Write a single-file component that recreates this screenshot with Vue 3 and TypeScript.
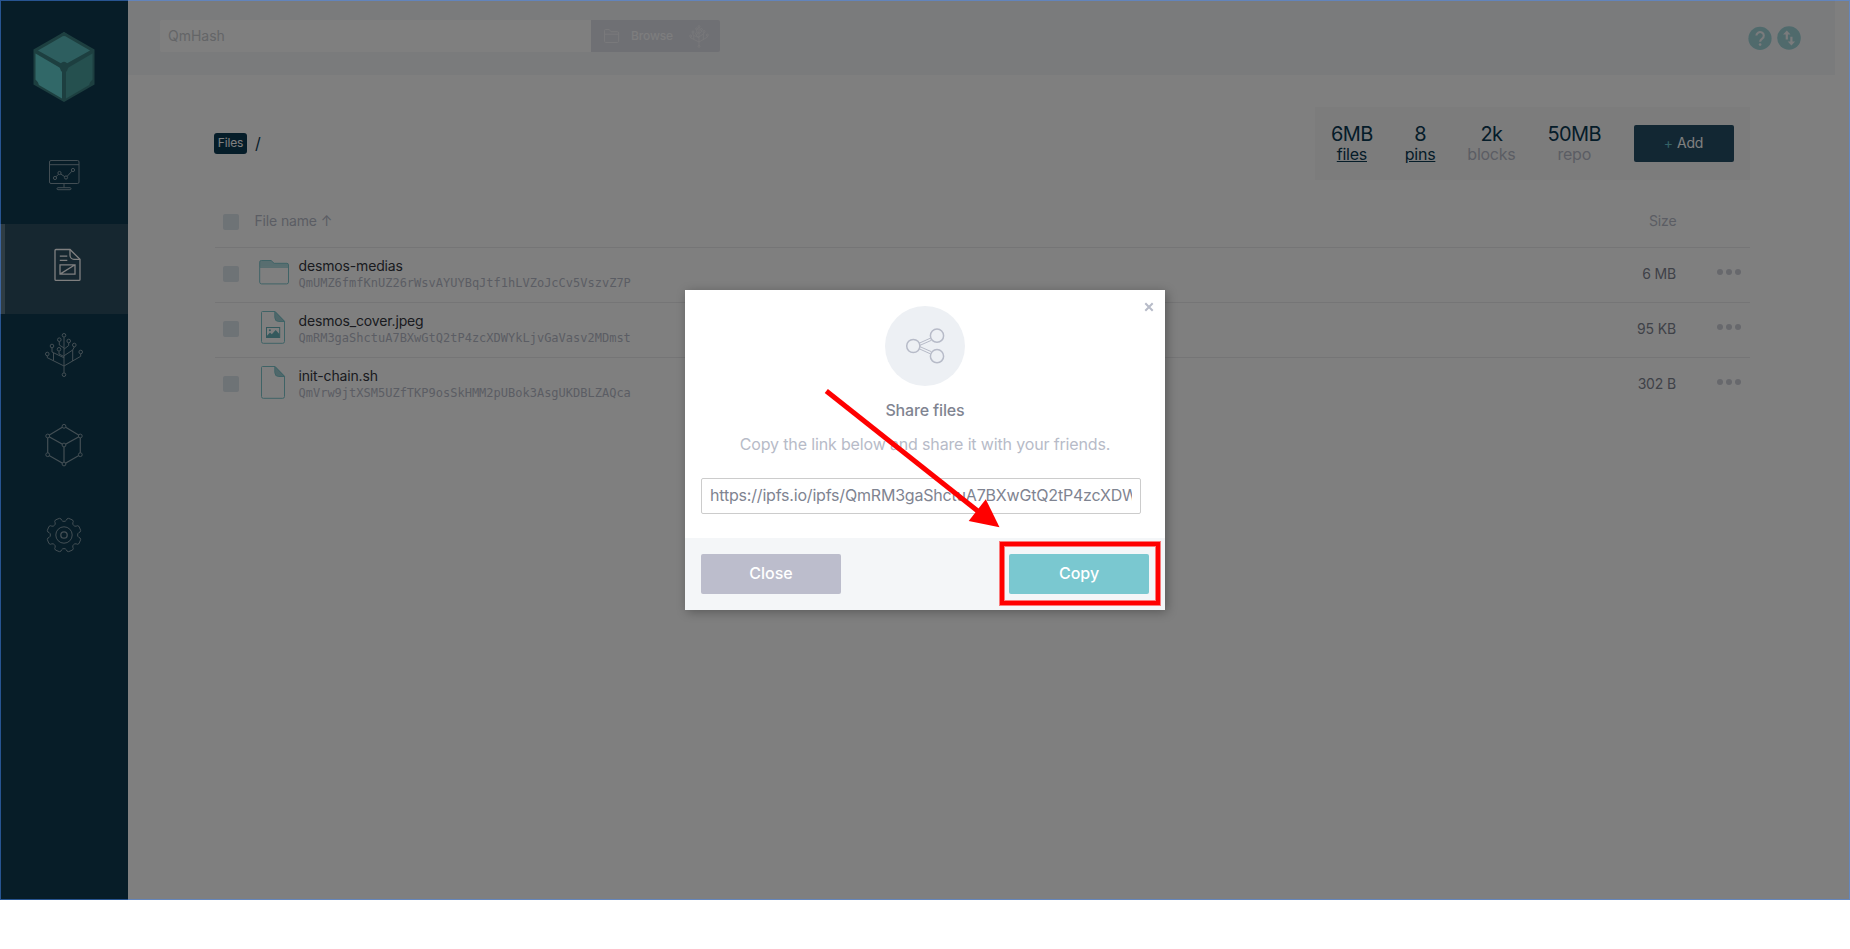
<script setup lang="ts">
interface FileRow {
  name: string
  hash: string
  size: string
  kind: 'folder' | 'image' | 'doc'
}

interface Stat {
  value: string
  label: string
  link: boolean
}

const files: FileRow[] = [
  { name: 'desmos-medias', hash: 'QmUMZ6fmfKnUZ26rWsvAYUYBqJtf1hLVZoJcCv5VszvZ7P', size: '6 MB', kind: 'folder' },
  { name: 'desmos_cover.jpeg', hash: 'QmRM3gaShctuA7BXwGtQ2tP4zcXDWYkLjvGaVasv2MDmst', size: '95 KB', kind: 'image' },
  { name: 'init-chain.sh', hash: 'QmVrw9jtXSM5UZfTKP9osSkHMM2pUBok3AsgUKDBLZAQca', size: '302 B', kind: 'doc' },
]

const stats: Stat[] = [
  { value: '6MB', label: 'files', link: true },
  { value: '8', label: 'pins', link: true },
  { value: '2k', label: 'blocks', link: false },
  { value: '50MB', label: 'repo', link: false },
]

const link = 'https://ipfs.io/ipfs/QmRM3gaShctuA7BXwGtQ2tP4zcXDWYkLjvGaVasv2MDmst'

const treeNodes = [
  [30, 10.3], [25.3, 14.7], [34.7, 16], [18, 21], [40.3, 20], [25, 24.3], [13.3, 29], [46.7, 27], [30, 49.7],
]
const treeEdges =
  'M30 12.3V47.8M25.3 16.6V20L30 23M34.7 18V20.5L30 24.2M18 23v4L30 32.8M25 26.3V29L30 31.5M40.3 22l-1.6 3L30 30.8M38.7 25V36M19.5 28V35.6M13.3 31V32.7L30 41L46.7 31.3V29'

const cubeNodes = [
  [30, 11.3], [13.7, 21], [46.3, 21], [30, 30], [13.7, 39.7], [46.3, 39.7], [30, 49],
]

// Eight-toothed gear outline, centred on (30, 30).
function gearPath(): string {
  const profile: [number, number][] = [
    [-22.5, 13.6], [-17, 13.9], [-13.5, 15], [-12, 16.4], [-7, 17.3], [7, 17.3], [12, 16.4], [13.5, 15], [17, 13.9],
  ]
  const pts: string[] = []
  for (let t = 0; t < 8; t++) {
    for (const [a, r] of profile) {
      const rad = ((t * 45 + 22.5 + a) * Math.PI) / 180
      pts.push(`${(30 + r * Math.cos(rad)).toFixed(2)} ${(30 + r * Math.sin(rad)).toFixed(2)}`)
    }
  }
  return `M${pts.join('L')}Z`
}
const gear = gearPath()
</script>

<template>
  <div class="page">
    <aside class="sidebar">
      <svg class="logo" width="62" height="70" viewBox="0 0 62 70">
        <path d="M31 0L61.5 17.5V52.5L31 70L.5 52.5V17.5Z" fill="#3b7f80" />
        <path d="M31 3.5L57 18.5L31 33L5 18.5Z" fill="#5bbdbf" />
        <path d="M2.5 21.5L29 37V66.5L2.5 51Z" fill="#62d0d1" />
        <path d="M59.5 21.5L33 37V66.5L59.5 51Z" fill="#4ba09f" />
        <path d="M26 33.5Q31 26 36 33.5L34 39Q31 42 28 39ZM27 2.5L31 0l4 2.5Q31 6 27 2.5ZM1 47Q6 49 6 55L1 52ZM61 47Q56 49 56 55L61 52Z" fill="#3b7f80" />
      </svg>
      <nav class="nav">
        <a class="item">
          <svg width="60" height="60" viewBox="0 0 60 60">
            <rect x="15.5" y="15.5" width="29.5" height="23" rx="1.5" />
            <path d="M15.5 19.7H45M30 38.5V42.7" />
            <rect x="23" y="42.7" width="14" height="2" rx="1" />
            <path d="M22 31.8L24.5 29.2M26.7 29L30.8 31.7M33.1 31.4L37.9 26.2" />
            <circle cx="21" cy="33" r="1.6" /><circle cx="25.5" cy="28" r="1.6" />
            <circle cx="32" cy="32.5" r="1.6" /><circle cx="39" cy="25" r="1.6" />
          </svg>
        </a>
        <a class="item active">
          <svg width="60" height="60" viewBox="0 0 60 60">
            <g transform="translate(-1 -.2)">
              <path d="M20 14.7H34L44 24.5V44.6a1 1 0 0 1-1 1H20a1 1 0 0 1-1-1V15.7a1 1 0 0 1 1-1Z" />
              <path d="M34 14.7V20.5a4 4 0 0 0 4 4H44" />
              <path d="M23.8 21.3H31.3M23.8 25.6H31.3M24 30H39V39.3H24ZM24 39.3L39 30" />
            </g>
          </svg>
        </a>
        <a class="item">
          <svg width="60" height="60" viewBox="0 0 60 60">
            <path :d="treeEdges" />
            <circle v-for="(n, i) in treeNodes" :key="i" :cx="n[0]" :cy="n[1]" r="1.8" class="node" />
          </svg>
        </a>
        <a class="item">
          <svg width="60" height="60" viewBox="0 0 60 60">
            <path d="M30 11.3L46.3 21V39.7L30 49L13.7 39.7V21ZM13.7 21L30 30L46.3 21M30 30V49" stroke-width="1.2" />
            <circle v-for="(n, i) in cubeNodes" :key="i" :cx="n[0]" :cy="n[1]" r="1.9" class="node" />
          </svg>
        </a>
        <a class="item">
          <svg width="60" height="60" viewBox="0 0 60 60">
            <path :d="gear" stroke-linejoin="round" />
            <circle cx="30" cy="30" r="8.2" />
            <circle cx="30" cy="30" r="3.2" stroke-width="1.3" />
          </svg>
        </a>
      </nav>
    </aside>

    <div class="content">
      <header class="topbar">
        <div class="search">
          <div class="hash">QmHash</div>
          <div class="browse">
            <svg width="18" height="16" viewBox="0 0 18 16">
              <path d="M1.5 13.3V2.5a1 1 0 0 1 1-1H6.2l1.8 2.2H14.3a1.3 1.3 0 0 1 1.3 1.3V13.2A1.3 1.3 0 0 1 14.3 14.5H2.7A1.2 1.2 0 0 1 1.5 13.3ZM1.5 6.2H15.6" />
            </svg>
            <span>Browse</span>
            <svg width="22" height="23" viewBox="8 7 44 46" class="mini-tree">
              <path :d="treeEdges" />
              <circle v-for="(n, i) in treeNodes" :key="i" :cx="n[0]" :cy="n[1]" r="2" />
            </svg>
          </div>
        </div>
        <div class="helpers">
          <svg width="24" height="24" viewBox="0 0 24 24">
            <circle cx="12" cy="12.4" r="11.6" fill="#a0d5d9" />
            <path d="M8.4 9.6a3.7 3.6 0 1 1 5.8 3c-1.4 1-2.1 1.6-2.1 3.2" fill="none" stroke="#f4f6f9" stroke-width="2.1" />
            <circle cx="12.1" cy="18.6" r="1.3" fill="#f4f6f9" />
          </svg>
          <svg width="24" height="24" viewBox="0 0 24 24">
            <circle cx="12" cy="12" r="11.8" fill="#a0d5d9" />
            <path d="M9.8 4.6L13.5 8.6H10.9V13.4H8.7V8.6H6.1ZM14.4 19.5L18.1 15.5H15.5V10.7H13.3V15.5H10.7Z" fill="#f4f6f9" />
          </svg>
        </div>
      </header>

      <main class="main">
        <div class="toolbar">
          <div class="crumbs"><span class="badge">Files</span><span class="slash">/</span></div>
          <div class="stats">
            <div v-for="s in stats" :key="s.label" class="stat" :class="{ linked: s.link }">
              <div class="value">{{ s.value }}</div>
              <div class="label">{{ s.label }}</div>
            </div>
            <div class="add"><span class="plus">+</span>Add</div>
          </div>
        </div>

        <div class="table">
          <div class="thead">
            <span class="check"></span>
            <span class="head-name">File name ↑</span>
            <span class="head-size">Size</span>
          </div>
          <div v-for="f in files" :key="f.hash" class="row">
            <span class="check"></span>
            <svg v-if="f.kind === 'folder'" class="ficon" width="32" height="36" viewBox="0 0 32 36">
              <g transform="translate(.1 .5)">
                <path d="M1.6 12V7.6A1.6 1.6 0 0 1 3.2 6H13l3 2.8H28.8a1.6 1.6 0 0 1 1.6 1.6V12Z" fill="#b1dde1" />
                <path d="M1.6 12.6V7.6A1.6 1.6 0 0 1 3.2 6H13l3 2.8H28.8a1.6 1.6 0 0 1 1.6 1.6V27.6a1.8 1.8 0 0 1-1.8 1.8H3.4a1.8 1.8 0 0 1-1.8-1.8ZM1.6 12.6H30.4" fill="none" stroke="#7fc6cd" />
              </g>
            </svg>
            <svg v-else class="ficon" width="32" height="36" viewBox="0 0 32 36">
              <path d="M4.5 2.5H17L26.5 12.2V32.5a1.8 1.8 0 0 1-1.8 1.8H5.3a1.8 1.8 0 0 1-1.8-1.8V3.5a1 1 0 0 1 1-1Z" fill="none" stroke="#7fc6cd" />
              <path d="M16.8 2.5L26.5 12.5H20.8a4 4 0 0 1-4-4Z" fill="#9fcfd4" stroke="#7fc6cd" />
              <g v-if="f.kind === 'image'">
                <rect x="8.5" y="18.5" width="13.2" height="10" fill="none" stroke="#69b3bb" />
                <path d="M8.5 27.3L12 23.5L13.8 25.3L17.7 21.1L21.6 25.3V28.5H8.5Z" fill="#69b3bb" />
                <circle cx="11.9" cy="21.3" r="1" fill="#69b3bb" />
              </g>
            </svg>
            <div class="names">
              <div class="fname">{{ f.name }}</div>
              <div class="fhash">{{ f.hash }}</div>
            </div>
            <span class="size">{{ f.size }}</span>
            <span class="dots"><i></i><i></i><i></i></span>
          </div>
        </div>
      </main>
    </div>

    <div class="overlay">
      <section class="modal">
        <span class="close-x">
          <svg width="10" height="10" viewBox="0 0 10 10"><path d="M1.3 1.3L8.7 8.7M8.7 1.3L1.3 8.7" stroke="#b7bbc8" stroke-width="2" /></svg>
        </span>
        <div class="body">
          <div class="circle">
            <svg width="44" height="40" viewBox="0 0 44 40">
              <g fill="none" stroke="#b7bbc8" stroke-width="1.5">
                <path d="M16 17.3L27.3 12.2M16.8 19.4L28.2 14.4M16 22.7L27.3 27.8M16.8 20.6L28.2 25.6" stroke-width="1" />
                <circle cx="10.3" cy="20" r="6.6" /><circle cx="34" cy="9.7" r="6.6" /><circle cx="34" cy="30.2" r="6.6" />
              </g>
            </svg>
          </div>
          <div class="title">Share files</div>
          <div class="desc">Copy the link below and share it with your friends.</div>
          <div class="field"><span>{{ link }}</span></div>
        </div>
        <footer class="actions">
          <button class="btn gray">Close</button>
          <button class="btn aqua">Copy</button>
        </footer>
      </section>
    </div>

    <div class="highlight"></div>
    <svg class="arrow" width="180" height="144" viewBox="0 0 180 144">
      <path d="M4.3 5L157 126" stroke="#f00" stroke-width="5" />
      <path d="M177.5 141.3L146.7 135L163.8 113.2Z" fill="#f00" />
    </svg>
    <div class="frame"></div>
  </div>
</template>

<style>
body {
  margin: 0;
  background: #fff;
}
</style>

<style scoped>
.page {
  position: relative;
  display: flex;
  width: 1850px;
  height: 900px;
  overflow: hidden;
  background: #fff;
  font-family: Inter, "Liberation Sans", sans-serif;
  font-size: 14px;
  letter-spacing: -0.15px;
}
.sidebar {
  display: flex;
  flex-direction: column;
  width: 128px;
  background: #0e3b51;
}
.logo {
  margin: 32px 0 32px 33px;
  flex: none;
}
.item {
  display: flex;
  justify-content: center;
  box-sizing: border-box;
  height: 90px;
  padding-top: 11px;
}
.item svg {
  fill: none;
  stroke: #fff;
  stroke-width: 1;
  opacity: 0.5;
}
.item .node {
  fill: #0e3b51;
}
.item.active {
  background: #2c4e61;
  border-left: 5px solid #5f7a89;
}
.item.active svg {
  opacity: 1;
  stroke-width: 1.3;
}
.content {
  flex: 1;
}
.topbar {
  display: flex;
  justify-content: space-between;
  box-sizing: border-box;
  width: 1707px;
  height: 75px;
  padding: 20px 34px 0 32px;
  background: #f4f6f9;
}
.search {
  display: flex;
  width: 560px;
  height: 32px;
  border-radius: 2px;
  overflow: hidden;
}
.hash {
  flex: 1;
  padding-left: 8px;
  background: #fff;
  line-height: 32px;
  letter-spacing: 0;
  color: #c8cbcf;
}
.browse {
  display: flex;
  align-items: center;
  box-sizing: border-box;
  width: 129px;
  padding-left: 12px;
  background: #dee0e8;
  color: #fafafc;
  font-size: 12px;
  font-weight: 500;
}
.browse svg {
  fill: none;
  stroke: #f2f2f6;
}
.browse span {
  margin: 0 15px 2px 10px;
}
.browse .mini-tree {
  stroke-width: 1.6;
}
.helpers {
  display: flex;
  gap: 5.5px;
  margin-top: 6px;
}
.main {
  margin: 32px 100px 0 86px;
}
.toolbar {
  display: flex;
  justify-content: space-between;
}
.crumbs {
  display: flex;
  align-items: center;
  height: 73px;
  color: #0b3a53;
}
.badge {
  width: 33px;
  height: 21px;
  border-radius: 3px;
  background: #0b3a53;
  color: #fff;
  font-size: 12px;
  line-height: 20px;
  text-align: center;
}
.slash {
  margin: -2px 0 0 8px;
  font-size: 16px;
}
.stats {
  display: flex;
  align-items: flex-start;
  box-sizing: border-box;
  width: 435px;
  height: 73px;
  padding-top: 17px;
  background: #f9f9f9;
}
.stat {
  padding: 0 16px;
  text-align: center;
  color: #b7bbc8;
}
.value {
  font-size: 20px;
  line-height: 20px;
  letter-spacing: -0.6px;
  color: #0b3a53;
}
.label {
  font-size: 16px;
  line-height: 20px;
  letter-spacing: -0.25px;
}
.linked .label {
  color: #0b3a53;
  text-decoration: underline;
}
.add {
  box-sizing: border-box;
  width: 100px;
  height: 37px;
  margin: 1px 16px 0 auto;
  padding-right: 1px;
  border-radius: 2px;
  background: #244e66;
  color: #fff;
  line-height: 36px;
  text-align: center;
}
.plus {
  margin-right: 4px;
  color: #69c4cd;
}
.table {
  margin: 14px 0 0 1px;
}
.thead {
  display: flex;
  align-items: center;
  height: 53px;
  padding: 0 73.5px 0 8px;
  color: #b7bbc8;
}
.thead .check {
  margin-top: 2px;
}
.check {
  flex: none;
  width: 16px;
  height: 16px;
  border-radius: 2px;
  background: #dde6ed;
}
.head-name {
  flex: 1;
  margin-left: 15.5px;
}
.row {
  display: flex;
  align-items: center;
  box-sizing: border-box;
  height: 55px;
  padding: 0 9px 2px 8px;
  border-top: 1px solid #eaebec;
}
.ficon {
  align-self: flex-start;
  margin: 6px 0 0 19px;
}
.names {
  flex: 1;
  margin-left: 8.5px;
}
.fname {
  line-height: 18px;
  color: #34373f;
}
.fhash {
  line-height: 16px;
  letter-spacing: 0;
  font-family: "DejaVu Sans Mono", monospace;
  font-size: 12px;
  color: #b7bbc8;
}
.size {
  margin-top: -2px;
  color: #7f8491;
}
.dots {
  display: flex;
  gap: 3px;
  margin: -4px 0 0 41px;
}
.dots i {
  width: 6px;
  height: 6px;
  border-radius: 50%;
  background: #ced0d9;
}
.overlay {
  position: absolute;
  inset: 0;
  display: flex;
  align-items: center;
  justify-content: center;
  background: rgba(0, 0, 0, 0.5);
}
.modal {
  position: relative;
  display: flex;
  flex-direction: column;
  width: 480px;
  height: 320px;
  background: #fff;
  box-shadow: 2px 2px 10px rgba(0, 0, 0, 0.3);
}
.close-x {
  position: absolute;
  top: 12px;
  right: 11px;
  line-height: 0;
}
.body {
  display: flex;
  flex-direction: column;
  align-items: center;
  flex: 1;
  padding-top: 16px;
}
.circle {
  display: flex;
  align-items: center;
  justify-content: center;
  width: 80px;
  height: 80px;
  border-radius: 50%;
  background: #edf0f4;
}
.title {
  margin-top: 14px;
  font-size: 16px;
  line-height: 20px;
  font-weight: 500;
  color: #7f8491;
}
.desc {
  margin-top: 14px;
  font-size: 16px;
  line-height: 20px;
  color: #b7bbc8;
}
.field {
  box-sizing: border-box;
  width: 440px;
  height: 36px;
  margin: 24px 0 0 16px;
  align-self: flex-start;
  padding: 0 8px;
  border: 1px solid #ccc;
  border-radius: 2px;
}
.field span {
  display: block;
  overflow: hidden;
  white-space: nowrap;
  font-size: 16px;
  line-height: 33px;
  letter-spacing: -0.19px;
  color: #7f8491;
}
.actions {
  display: flex;
  justify-content: space-between;
  box-sizing: border-box;
  height: 72px;
  padding: 16px;
  background: #f4f6f8;
}
.btn {
  width: 140px;
  height: 40px;
  padding: 0 0 2px;
  border: 0;
  border-radius: 2px;
  color: #fff;
  font-family: inherit;
  font-size: 16px;
  font-weight: 500;
}
.gray {
  background: #bcbdcc;
}
.aqua {
  background: #7ac8d0;
}
.highlight {
  position: absolute;
  left: 1000px;
  top: 542px;
  box-sizing: border-box;
  width: 160px;
  height: 63px;
  border: 4px solid #f00;
  box-shadow: 0 0 0 1px rgba(255, 0, 0, 0.5), inset 0 0 0 1px rgba(255, 0, 0, 0.5);
}
.arrow {
  position: absolute;
  left: 822px;
  top: 386px;
}
.frame {
  position: absolute;
  inset: 0;
  border: 1px solid rgba(74, 143, 255, 0.49);
}
</style>
